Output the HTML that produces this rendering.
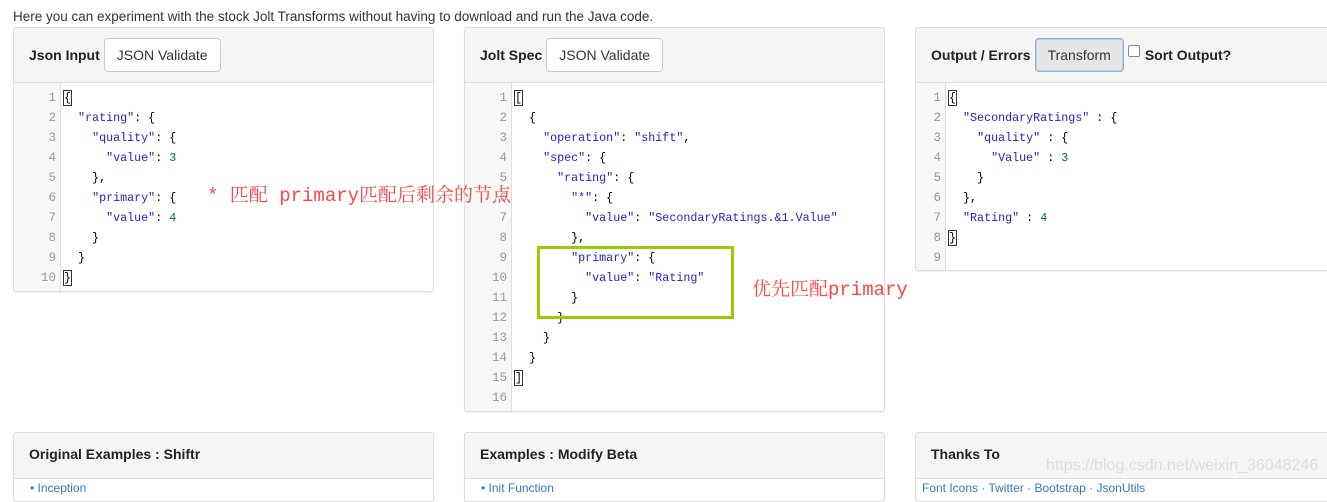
<!DOCTYPE html>
<html><head><meta charset="utf-8"><style>
*{box-sizing:border-box;margin:0;padding:0}
body{width:1327px;height:485px;overflow:hidden;background:#fff;font-family:"Liberation Sans",Arial,sans-serif;color:#333;position:relative}
.top{position:absolute;left:13px;top:9px;font-size:13.5px;color:#333}
.panel{position:absolute;border:1px solid #ddd;border-radius:3px;background:#fff;box-shadow:0 1px 1px rgba(0,0,0,.06);overflow:hidden}
.hd{height:55px;background:#f5f5f5;border-bottom:1px solid #ddd;display:flex;align-items:center;padding-left:15px;font-weight:bold;font-size:14px;color:#222}
.btn{display:inline-block;margin-left:4px;border:1px solid #ccc;border-radius:4px;background:#fff;font-weight:normal;font-size:14px;color:#333;padding:0 12px;height:34px;line-height:32px}
.btn.act{background:#e6e6e6;border-color:#8ab0e0;box-shadow:inset 0 0 0 1px #b5cdef}
.cm{position:absolute;left:0;right:0;top:55px;bottom:0;display:flex}
.gut{width:47px;background:#f7f7f7;border-right:1px solid #ddd;text-align:right;padding-right:4px;color:#999;font-family:"Liberation Mono",monospace;font-size:12.5px;padding-top:5px}
.gut div,.code div{height:20px;line-height:20px}
.code{padding-left:3px;padding-top:5px;font-family:"Liberation Mono",monospace;font-size:11.7px;color:#000;white-space:pre}
.s{color:#22c}.n{color:#164}
.br{outline:1px solid #333}
.red{position:absolute;color:#f44;font-family:"Liberation Mono","Noto Serif CJK SC",monospace;font-size:19px;white-space:pre;line-height:22px}
.bhd{height:46px;background:#f5f5f5;border-bottom:1px solid #ddd;padding-left:15px;line-height:42px;font-weight:bold;font-size:14px;color:#222}
</style></head><body>
<div class="top">Here you can experiment with the stock Jolt Transforms without having to download and run the Java code.</div>

<div class="panel" style="left:13px;top:27px;width:421px;height:265px">
<div class="hd">Json Input <span class="btn">JSON Validate</span></div>
<div class="cm"><div class="gut"><div>1</div><div>2</div><div>3</div><div>4</div><div>5</div><div>6</div><div>7</div><div>8</div><div>9</div><div>10</div></div>
<div class="code"><div><span class="br">{</span></div><div>  <span class="s">"rating"</span>: {</div><div>    <span class="s">"quality"</span>: {</div><div>      <span class="s">"value"</span>: <span class="n">3</span></div><div>    },</div><div>    <span class="s">"primary"</span>: {</div><div>      <span class="s">"value"</span>: <span class="n">4</span></div><div>    }</div><div>  }</div><div><span class="br">}</span></div></div></div>
</div>

<div class="panel" style="left:464px;top:27px;width:421px;height:385px">
<div class="hd">Jolt Spec <span class="btn">JSON Validate</span></div>
<div class="cm"><div class="gut"><div>1</div><div>2</div><div>3</div><div>4</div><div>5</div><div>6</div><div>7</div><div>8</div><div>9</div><div>10</div><div>11</div><div>12</div><div>13</div><div>14</div><div>15</div><div>16</div></div>
<div class="code"><div><span class="br">[</span></div><div>  {</div><div>    <span class="s">"operation"</span>: <span class="s">"shift"</span>,</div><div>    <span class="s">"spec"</span>: {</div><div>      <span class="s">"rating"</span>: {</div><div>        <span class="s">"*"</span>: {</div><div>          <span class="s">"value"</span>: <span class="s">"SecondaryRatings.&amp;1.Value"</span></div><div>        },</div><div>        <span class="s">"primary"</span>: {</div><div>          <span class="s">"value"</span>: <span class="s">"Rating"</span></div><div>        }</div><div>      }</div><div>    }</div><div>  }</div><div><span class="br">]</span></div><div></div></div></div>
</div>

<div class="panel" style="left:915px;top:27px;width:420px;height:244px">
<div class="hd">Output / Errors <span class="btn act">Transform</span><span style="display:inline-block;width:12px;height:12px;border:1px solid #888;border-radius:2px;background:#fff;margin:0 5px 8px 4px"></span>Sort Output?</div>
<div class="cm"><div class="gut" style="width:30px"><div>1</div><div>2</div><div>3</div><div>4</div><div>5</div><div>6</div><div>7</div><div>8</div><div>9</div></div>
<div class="code"><div><span class="br">{</span></div><div>  <span class="s">"SecondaryRatings"</span> : {</div><div>    <span class="s">"quality"</span> : {</div><div>      <span class="s">"Value"</span> : <span class="n">3</span></div><div>    }</div><div>  },</div><div>  <span class="s">"Rating"</span> : <span class="n">4</span></div><div><span class="br">}</span></div><div></div></div></div>
</div>

<div style="position:absolute;left:537px;top:246px;width:197px;height:73px;border:3px solid #99cc00"></div>
<div class="red" style="left:207px;top:185px">* 匹配 primary匹配后剩余的节点</div>
<div class="red" style="left:752px;top:279px">优先匹配primary</div>

<div class="panel" style="left:13px;top:432px;width:421px;height:70px"><div class="bhd">Original Examples : Shiftr</div></div>
<div class="panel" style="left:464px;top:432px;width:421px;height:70px"><div class="bhd">Examples : Modify Beta</div></div>
<div class="panel" style="left:915px;top:432px;width:420px;height:70px"><div class="bhd">Thanks To</div>
<div style="position:absolute;left:130px;top:24px;font-size:16px;color:#ddd">https://blog.csdn.net/weixin_36048246</div></div>
<div style="position:absolute;left:30px;top:481px;font-size:12px;color:#337ab7">• Inception</div>
<div style="position:absolute;left:481px;top:481px;font-size:12px;color:#337ab7">• Init Function</div>
<div style="position:absolute;left:922px;top:481px;font-size:12px;color:#337ab7">Font Icons · Twitter · Bootstrap · JsonUtils</div>
</body></html>
